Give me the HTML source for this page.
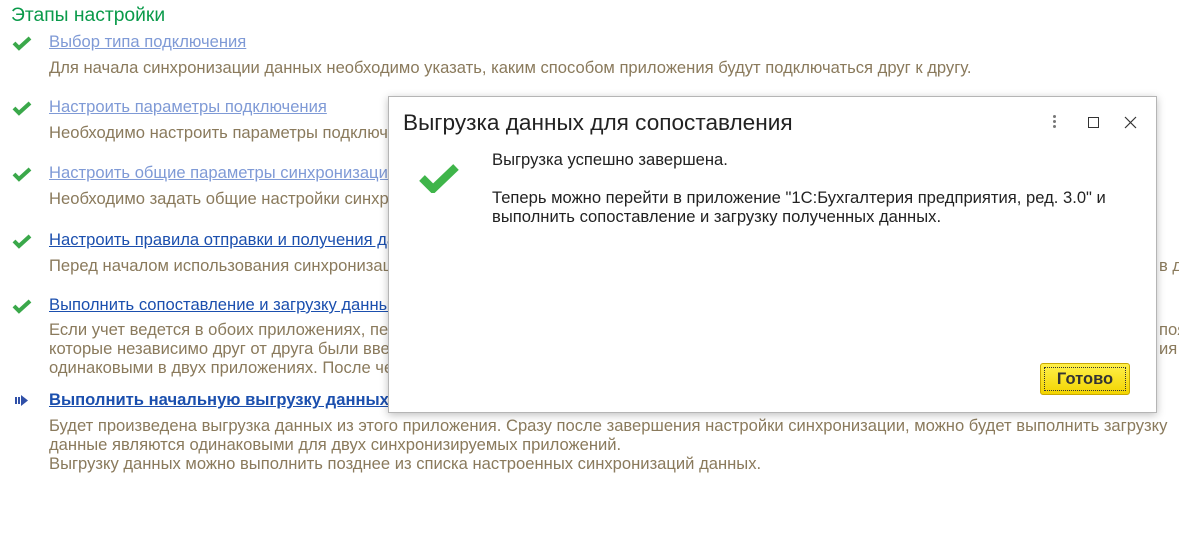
<!DOCTYPE html>
<html><head><meta charset="utf-8"><style>
body{margin:0;width:1179px;height:535px;background:#fff;font-family:"Liberation Sans",sans-serif;position:relative;overflow:hidden}
.a{position:absolute;white-space:nowrap;font-size:16.6px}
.h{left:11px;top:5px;font-size:19.3px;color:#0a9a4a}
.l{left:49px;text-decoration:underline}
.v{color:#7f9ad6}
.d{color:#1b4fae}
.t{left:49px;color:#8a7a5c;line-height:19px}
.r{left:1159px;color:#8a7a5c;line-height:19px}
.ck{position:absolute;left:12px}
.dlg{position:absolute;left:388px;top:96px;width:767px;height:315px;background:#fff;border:1px solid #b5b5b5;box-shadow:0 2px 8px rgba(0,0,0,.25)}
</style></head><body>
<div class="a h">Этапы настройки</div>

<svg class="ck" style="top:35px" width="20" height="16" viewBox="0 0 20 16"><path d="M2 8l5 5L18 3" stroke="#3aa84a" stroke-width="4" fill="none"/></svg>
<div class="a l v" style="top:32px">Выбор типа подключения</div>
<div class="a t" style="top:58px">Для начала синхронизации данных необходимо указать, каким способом приложения будут подключаться друг к другу.</div>

<svg class="ck" style="top:100px" width="20" height="16" viewBox="0 0 20 16"><path d="M2 8l5 5L18 3" stroke="#3aa84a" stroke-width="4" fill="none"/></svg>
<div class="a l v" style="top:97px">Настроить параметры подключения</div>
<div class="a t" style="top:123px">Необходимо настроить параметры подключения к другому приложению.</div>

<svg class="ck" style="top:166px" width="20" height="16" viewBox="0 0 20 16"><path d="M2 8l5 5L18 3" stroke="#3aa84a" stroke-width="4" fill="none"/></svg>
<div class="a l v" style="top:163px">Настроить общие параметры синхронизации</div>
<div class="a t" style="top:189px">Необходимо задать общие настройки синхронизации данных.</div>

<svg class="ck" style="top:233px" width="20" height="16" viewBox="0 0 20 16"><path d="M2 8l5 5L18 3" stroke="#3aa84a" stroke-width="4" fill="none"/></svg>
<div class="a l d" style="top:230px">Настроить правила отправки и получения данных</div>
<div class="a t" style="top:256px">Перед началом использования синхронизации данных необходимо настроить правила</div>
<div class="a r" style="top:256px">в др</div>

<svg class="ck" style="top:298px" width="20" height="16" viewBox="0 0 20 16"><path d="M2 8l5 5L18 3" stroke="#3aa84a" stroke-width="4" fill="none"/></svg>
<div class="a l d" style="top:295px">Выполнить сопоставление и загрузку данных</div>
<div class="a t" style="top:320px">Если учет ведется в обоих приложениях, перед началом синхронизации<br>которые независимо друг от друга были введены в обоих приложениях<br>одинаковыми в двух приложениях. После чего будут загружены данные.</div>
<div class="a r" style="top:320px">появ<br>ия м</div>

<svg style="position:absolute;left:15px;top:395px" width="16" height="11" viewBox="0 0 16 11"><rect x="0" y="2" width="2" height="7" fill="#3050a8"/><rect x="3" y="2" width="2" height="7" fill="#3050a8"/><path d="M6 0l7 5.5L6 11z" fill="#3050a8"/></svg>
<div class="a l d" style="top:390px;font-weight:bold">Выполнить начальную выгрузку данных</div>
<div class="a t" style="top:416px">Будет произведена выгрузка данных из этого приложения. Сразу после завершения настройки синхронизации, можно будет выполнить загрузку<br>данные являются одинаковыми для двух синхронизируемых приложений.<br>Выгрузку данных можно выполнить позднее из списка настроенных синхронизаций данных.</div>

<div class="dlg">
<div class="a" style="left:14px;top:13px;font-size:22.6px;color:#222">Выгрузка данных для сопоставления</div>
<div style="position:absolute;left:664px;top:18px;width:3px">
<div style="width:3px;height:3px;border-radius:2px;background:#777;margin-bottom:2px"></div><div style="width:3px;height:3px;border-radius:2px;background:#777;margin-bottom:2px"></div><div style="width:3px;height:3px;border-radius:2px;background:#777"></div></div>
<div style="position:absolute;left:699px;top:20px;width:9px;height:9px;border:1px solid #333"></div>
<svg style="position:absolute;left:735px;top:19px" width="13" height="13" viewBox="0 0 13 13"><path d="M1 1l11 11M12 1L1 12" stroke="#333" stroke-width="1.2"/></svg>
<svg style="position:absolute;left:30px;top:66px" width="40" height="30" viewBox="0 0 40 30"><path d="M3 15l11 11L37 4" stroke="#3fb54a" stroke-width="8" fill="none"/></svg>
<div class="a" style="left:103px;top:53px;color:#222;line-height:19px">Выгрузка успешно завершена.<br><br>Теперь можно перейти в приложение "1С:Бухгалтерия предприятия, ред. 3.0" и<br>выполнить сопоставление и загрузку полученных данных.</div>
<div style="position:absolute;left:651px;top:266px;width:90px;height:32px;box-sizing:border-box;border:1px solid #c9a800;border-radius:3px;background:linear-gradient(#fff04a,#f2d400);">
<div style="position:absolute;left:3px;top:3px;right:3px;bottom:3px;border:1px dotted #333;text-align:center;font-weight:bold;font-size:16.5px;line-height:23px;color:#333">Готово</div></div>
</div>
</body></html>
